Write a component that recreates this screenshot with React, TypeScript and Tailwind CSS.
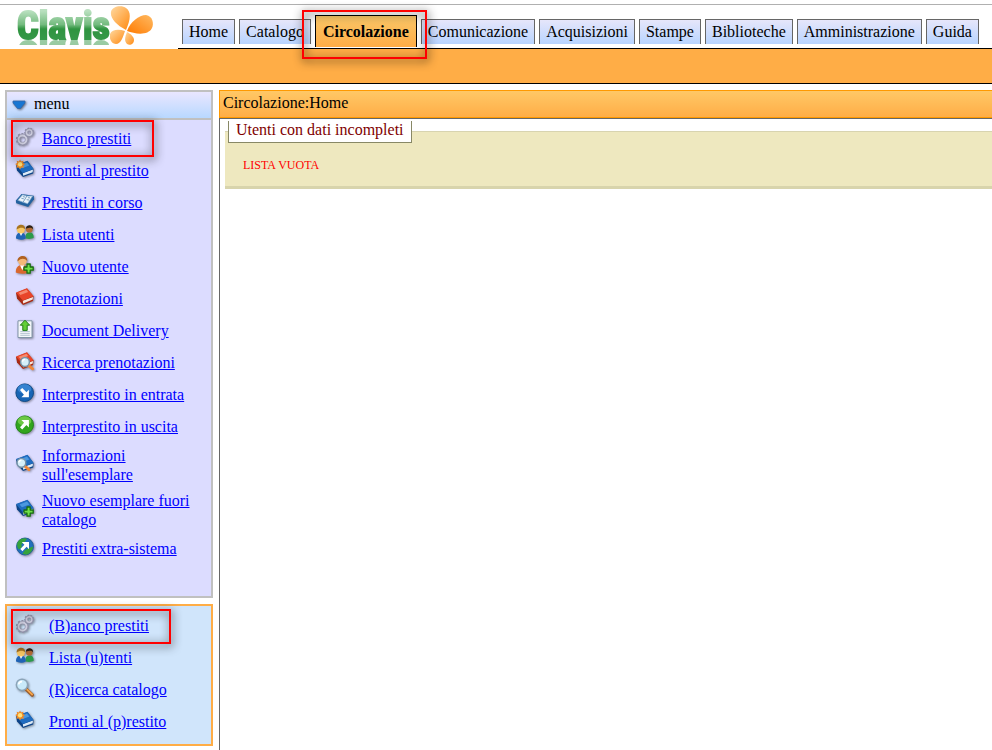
import React from "react";

type MenuItem = {
  label: string;
  Icon: React.FC;
  marked?: boolean;
};

const Svg: React.FC<{ children: React.ReactNode }> = ({ children }) => (
  <svg
    viewBox="0 0 20 20"
    aria-hidden="true"
    className="mb-1 h-5 w-5 shrink-0 drop-shadow-[1px_1px_1px_rgba(0,0,0,0.4)]"
  >
    {children}
  </svg>
);

const Gears = () => (
  <Svg>
    <circle cx="7.5" cy="12.5" r="4" fill="none" stroke="#9494ad" strokeWidth="3" />
    <circle cx="7.5" cy="12.5" r="5.8" fill="none" stroke="#9494ad" strokeWidth="1.6" strokeDasharray="2 1.65" />
    <circle cx="7.5" cy="12.5" r="4" fill="none" stroke="#cdcddd" strokeWidth="1.8" />
    <circle cx="14.2" cy="5.5" r="2.7" fill="none" stroke="#9494ad" strokeWidth="2.4" />
    <circle cx="14.2" cy="5.5" r="4.3" fill="none" stroke="#9494ad" strokeWidth="1.4" strokeDasharray="1.7 1.3" />
    <circle cx="14.2" cy="5.5" r="2.7" fill="none" stroke="#cdcddd" strokeWidth="1.4" />
  </Svg>
);

const BlueBook = () => (
  <>
    <path d="M1 6.5 12.5 2 18.5 10 18.2 14.5 8 18 2 11.5Z" fill="#0d4488" />
    <path d="M7.8 14.2 18 10.6 17.7 13.2 8.2 16.8Z" fill="#dbe9f6" />
    <path d="M1 6 12.5 1.8 18.6 9.9 7.6 14Z" fill="#1f6cc0" />
    <path d="M4.5 6.4 12 3.5 14.3 6.4 7 9.2Z" fill="#4b98e0" />
  </>
);

const RedBook = () => (
  <>
    <path d="M1 6 12 1.5 18.5 9.5 18 14 8 18 2 11.5Z" fill="#a72a14" />
    <path d="M7.8 13.8 18 10 17.7 12.6 8.2 16.5Z" fill="#f6e8df" />
    <path d="M1 5.5 12 1.3 18.7 9.2 7.8 13.4Z" fill="#e8452a" />
    <path d="M3.5 5.8 11.5 2.8 13.2 4.9 5.4 8Z" fill="#f58a70" />
  </>
);

const Lens: React.FC<{ x: number; y: number }> = ({ x, y }) => (
  <g transform={`translate(${x} ${y})`}>
    <path d="M3.4 3.4 7.6 6.8" stroke="#f0873a" strokeWidth="2.8" strokeLinecap="round" />
    <circle r="4.4" fill="#d5effa" stroke="#7693a8" strokeWidth="1.5" />
    <path d="M-2.5-.3A2.5 2.5 0 0 1 0-2.6" fill="none" stroke="#fff" strokeWidth="1.4" />
  </g>
);

const Plus = () => (
  <path
    d="M12 9h3.2v3h3v3.2h-3v3H12v-3H9V12h3Z"
    fill="#6fe048"
    stroke="#176b12"
    strokeWidth="1.3"
    strokeLinejoin="round"
  />
);

const ReadyBook = () => (
  <Svg>
    <BlueBook />
    <path
      d="m5 .5 1.2 1.9 2.2-.6-.3 2.3 2 1-1.8 1.4.6 2.3-2.4-.3L5 10.2 3.8 8.4l-2.4.3.5-2.3L.3 5l1.9-1L1.7 1.8l2.2.6Z"
      fill="#f08a24"
    />
    <circle cx="5.1" cy="5.2" r="2.2" fill="#ffe27a" />
  </Svg>
);

const OpenBook = () => (
  <Svg>
    <path d="M.8 9.5 6.5 3l12.3 1.8.2 3.5-5.8 7.6L1.2 12.3Z" fill="#23629f" />
    <path d="M2.8 9.3 7.5 3.8l4.4 1.2 5.7.1-5 7.6-4.5-1.5Z" fill="#edf5fb" stroke="#80a8cc" strokeWidth=".7" />
    <path d="M11.9 5 8.1 11.2M7.8 5.6l2.4.5M6.4 7.3l2.5.6M12.9 6.7l2.2.2M11.7 8.7l2.3.3" fill="none" stroke="#6d97bd" strokeWidth=".9" />
  </Svg>
);

const Users = () => (
  <Svg>
    <path d="M10.5 15.5c-.3-4 .8-6 4-6s4.3 2 4.2 5.3c-2 1.2-5 1.4-8.2.7Z" fill="#2b9a4a" />
    <circle cx="14.3" cy="6.2" r="3.4" fill="#b56b36" />
    <path d="M10.8 5.8c.2-4.7 7.7-4.6 7.3.4-1.1-1.7-3-2.2-7.3-.4Z" fill="#2b2118" />
    <path d="M1 15.6c0-4 1.4-5.8 4.8-5.8s5 2 5 5.6c-2.4 1.6-7 1.7-9.8.2Z" fill="#1f63b5" />
    <path d="m4.6 10 1.4 3 1.6-3Z" fill="#fff" />
    <circle cx="5.9" cy="6.6" r="4" fill="#f8c865" />
    <path d="M1.6 6.6c-.4-6 9-6.6 8.6-.4C8.3 4.4 5.3 3.8 1.6 6.6Z" fill="#a87420" />
  </Svg>
);

const NewUser = () => (
  <Svg>
    <path d="M.8 17.6c0-5 2-7.6 6.5-7.6s6.6 2.5 6.6 7.4c-3.8 1.6-9.6 1.6-13.1.2Z" fill="#d9672e" />
    <path d="m5 10.3 2.3 5 2.2-5Z" fill="#fff" />
    <circle cx="7.4" cy="5.8" r="4.4" fill="#f4b878" />
    <path d="M2.5 6.4C1.8-.3 13-1.4 12.2 6 9.6 3.4 6.5 2.8 2.5 6.4Z" fill="#b0601f" />
    <Plus />
  </Svg>
);

const Reservation = () => (
  <Svg>
    <RedBook />
  </Svg>
);

const Delivery = () => (
  <Svg>
    <path d="M3 1.8h14v16.7H3Z" fill="#f4f7fa" stroke="#8195a8" />
    <path d="M5.3 12.5h9.5M5.3 14.4h9.5M5.3 16.3h9.5" stroke="#a5b7c6" strokeWidth=".8" />
    <path d="m10 1.2 4.7 5h-2.5v5.2H7.8V6.2H5.3Z" fill="#63cf35" stroke="#217b17" />
  </Svg>
);

const ReservationSearch = () => (
  <Svg>
    <RedBook />
    <Lens x={10} y={11} />
  </Svg>
);

const Incoming = () => (
  <Svg>
    <circle cx="9.7" cy="9.7" r="8.8" fill="#1765b5" stroke="#124b87" />
    <ellipse cx="9.5" cy="6" rx="6.8" ry="4.7" fill="#3583d0" />
    <path d="m5 7.1 2.2-2.2 4.3 4.3 2.4-2.4v7.5H6.4l2.5-2.5Z" fill="#fff" />
  </Svg>
);

const Outgoing = () => (
  <Svg>
    <circle cx="9.7" cy="9.7" r="8.8" fill="#31a51d" stroke="#24831c" />
    <ellipse cx="9.5" cy="6" rx="6.8" ry="4.7" fill="#6cc844" />
    <path d="M6.4 5h7.5v7.5l-2.5-2.5-4.2 4.4L5 12.2 9.1 7.8Z" fill="#fff" />
  </Svg>
);

const ItemInfo = () => (
  <Svg>
    <BlueBook />
    <Lens x={6.4} y={9.8} />
  </Svg>
);

const NewItem = () => (
  <Svg>
    <BlueBook />
    <Plus />
  </Svg>
);

const Globe = () => (
  <Svg>
    <circle cx="10" cy="9.5" r="8.5" fill="#2270bd" stroke="#165692" strokeWidth=".8" />
    <path d="M3 4.4C5.4 1 10 .5 12 1.9L9.8 5 6.4 7.2l.5 3-3 2.3C1.6 9.7 1.7 6.6 3 4.4ZM14 11l4-1.5c0 3.7-2.8 7.4-6.6 8.2l-4-.9 2.4-3.6Z" fill="#35a33c" />
    <path d="M6.8 5h7.2v7.2l-2.4-2.4-4.2 4.4-2.1-2.1 4.1-4.4Z" fill="#fff" />
  </Svg>
);

const Magnifier = () => (
  <Svg>
    <path d="m11.2 11.2 6 5.8" stroke="#9a5c2b" strokeWidth="3.6" strokeLinecap="round" />
    <path d="m12.2 11.7 5 4.8" stroke="#f5a54a" strokeWidth="1.8" strokeLinecap="round" />
    <circle cx="7" cy="6.8" r="5.6" fill="#c9eafa" stroke="#8ba4b8" strokeWidth="1.5" />
    <path d="M3.7 6.4c.2-1.8 1.7-2.9 3.4-2.8" fill="none" stroke="#fff" strokeWidth="1.7" />
  </Svg>
);

const tabs = [
  "Home",
  "Catalogo",
  "Circolazione",
  "Comunicazione",
  "Acquisizioni",
  "Stampe",
  "Biblioteche",
  "Amministrazione",
  "Guida",
];

const menuItems: MenuItem[] = [
  { label: "Banco prestiti", Icon: Gears, marked: true },
  { label: "Pronti al prestito", Icon: ReadyBook },
  { label: "Prestiti in corso", Icon: OpenBook },
  { label: "Lista utenti", Icon: Users },
  { label: "Nuovo utente", Icon: NewUser },
  { label: "Prenotazioni", Icon: Reservation },
  { label: "Document Delivery", Icon: Delivery },
  { label: "Ricerca prenotazioni", Icon: ReservationSearch },
  { label: "Interprestito in entrata", Icon: Incoming },
  { label: "Interprestito in uscita", Icon: Outgoing },
  { label: "Informazioni sull'esemplare", Icon: ItemInfo },
  { label: "Nuovo esemplare fuori catalogo", Icon: NewItem },
  { label: "Prestiti extra-sistema", Icon: Globe },
];

const shortcuts: MenuItem[] = [
  { label: "(B)anco prestiti", Icon: Gears, marked: true },
  { label: "Lista (u)tenti", Icon: Users },
  { label: "(R)icerca catalogo", Icon: Magnifier },
  { label: "Pronti al (p)restito", Icon: ReadyBook },
];

const Marker: React.FC<{ className: string }> = ({ className }) => (
  <span
    className={`pointer-events-none absolute z-10 border-2 border-[#ff0000] drop-shadow-[1px_2px_5px_rgba(0,0,0,0.9)] ${className}`}
  />
);

const Logo: React.FC = () => (
  <a href="#" className="flex h-11 items-start pl-4">
    <svg
      viewBox="0 0 94 35"
      className="h-[35px] w-[94px] overflow-visible [-webkit-box-reflect:below_0px_linear-gradient(transparent_85%,rgba(0,0,0,0.5)_85%)]"
    >
      <defs>
        <linearGradient id="letters" gradientUnits="userSpaceOnUse" x1="0" y1="6" x2="0" y2="36">
          <stop offset="0" stopColor="#b9e0bf" />
          <stop offset="0.45" stopColor="#74bb7f" />
          <stop offset="0.6" stopColor="#2f9440" />
          <stop offset="1" stopColor="#37994a" />
        </linearGradient>
      </defs>
      <text
        x="1"
        y="34"
        fill="url(#letters)"
        stroke="url(#letters)"
        strokeWidth="2"
        className="font-['Liberation_Sans_Narrow','Roboto_Condensed','Open_Sans_Condensed',sans-serif] text-[38px] font-bold"
      >
        Clavis
      </text>
    </svg>
    <svg viewBox="0 0 44 40" className="mt-px h-10 w-11" aria-hidden="true">
      <defs>
        <linearGradient id="petalLight" x1="0" y1="0" x2="1" y2="1">
          <stop offset="0" stopColor="#ffd9a0" />
          <stop offset="1" stopColor="#ff8a12" />
        </linearGradient>
        <linearGradient id="petalDeep" x1="0" y1="1" x2="1" y2="0">
          <stop offset="0" stopColor="#ff7a00" />
          <stop offset="1" stopColor="#ffba62" />
        </linearGradient>
      </defs>
      <path d="M16 24C6 19 0 12 1 6 2 0 12-1 16 2c6 4 4 13 0 22Z" fill="url(#petalLight)" />
      <path d="M17 25C20 16 29 9 36 9c7 1 8 9 6 13-4 8-17 6-25 3Z" fill="url(#petalDeep)" />
      <path d="M15 25C9 23 2 23 0 28c-1 6 2 10 6 10 5 0 7-7 9-13Z" fill="url(#petalLight)" />
      <path d="M17 26c-2 5-3 9 0 12 3 2 7 0 7-4 0-3-3-6-7-8Z" fill="url(#petalLight)" />
    </svg>
  </a>
);

const MenuList: React.FC<{
  items: MenuItem[];
  gap: string;
  marker: string;
}> = ({ items, gap, marker }) => (
  <ul className="flex flex-col gap-px px-2">
    {items.map(({ label, Icon, marked }) => (
      <li key={label} className={`relative flex min-h-[31px] items-center py-[3px] ${gap}`}>
        <Icon />
        <a href="#" className="leading-[19px] text-[#0000ff] underline">
          {label}
        </a>
        {marked && <Marker className={marker} />}
      </li>
    ))}
  </ul>
);

const App: React.FC = () => {
  return (
    <div className="flex min-h-screen flex-col bg-white pt-1 font-['Liberation_Serif',serif] text-base text-black">
      <header>
        <div className="flex h-[45px] border-t border-[#b0b0b0]">
          <div className="w-[178px] shrink-0">
            <Logo />
          </div>
          <nav className="grow border-b border-black pl-1">
            <ul className="flex gap-1 pt-[14px]">
              {tabs.map((tab) =>
                tab === "Circolazione" ? (
                  <li key={tab} className="relative -mt-1">
                    <a
                      href="#"
                      aria-current="page"
                      className="block h-8 border border-b-0 border-black bg-linear-to-b from-[#f9c667] to-[#ffad46] px-[7px] leading-8 font-bold"
                    >
                      {tab}
                    </a>
                    <Marker className="-top-[5px] -right-[10px] -bottom-3 -left-[13px]" />
                  </li>
                ) : (
                  <li key={tab}>
                    <a
                      href="#"
                      className="block h-[25px] border border-b-0 border-[#666] bg-linear-to-b from-[#e6e6fa] to-[#b8d4ff] px-[6px] leading-6"
                    >
                      {tab}
                    </a>
                  </li>
                ),
              )}
            </ul>
          </nav>
        </div>
        <div className="h-[35px] border-b border-black bg-[#ffad46]" />
      </header>

      <div className="flex grow gap-[6px] pl-[5px]">
        <aside className="flex w-[208px] shrink-0 flex-col gap-[6px] pt-[6px] pb-1">
          <section className="border-2 border-[#c0c0c0] bg-[#dcdcff] pb-8">
            <h2 className="flex h-7 items-start gap-2 border-b-2 border-[#c0c0c0] bg-linear-to-b from-[#e9e6ff] to-[#b8d8ff] pl-[5px] leading-6">
              <svg
                viewBox="0 0 14 10"
                className="mt-2 h-[10px] w-[14px] drop-shadow-[1px_1px_1px_rgba(0,0,0,0.5)]"
                aria-hidden="true"
              >
                <path d="M1 1h12v2L8.5 8.5h-3L1 3Z" fill="#1876d2" stroke="#3565a5" strokeWidth=".8" />
              </svg>
              menu
            </h2>
            <div className="pt-[3px]">
              <MenuList
                items={menuItems}
                gap="gap-[7px]"
                marker="-top-[3px] -bottom-[3px] -left-1 w-[143px]"
              />
            </div>
          </section>
          <section className="border-2 border-[#ffad46] bg-[#d0e5fb] pt-1 pb-[7px]">
            <MenuList
              items={shortcuts}
              gap="gap-[14px]"
              marker="-top-px -bottom-[3px] -left-1 w-[160px]"
            />
          </section>
        </aside>

        <main className="flex min-w-0 grow flex-col pt-[6px]">
          <h1 className="h-7 border border-r-0 border-[#ff9900] bg-linear-to-b from-[#ffc866] to-[#ffad46] pl-[3px] leading-6">
            Circolazione:Home
          </h1>
          <div className="grow border-t border-l border-[#666] pt-3 pl-[5px]">
            <section className="relative h-[58px] border-t border-b-3 border-t-[#d8d4b0] border-b-[#d8d4ac] bg-[#eee8bf]">
              <h2 className="absolute -top-[11px] left-[3px] h-[22px] border border-t-0 border-[#888866] bg-white px-[7px] leading-[18px] text-[#800000]">
                Utenti con dati incompleti
              </h2>
              <p className="pt-[23px] pl-[18px] text-xs leading-5 text-[#ff0000]">LISTA VUOTA</p>
            </section>
          </div>
        </main>
      </div>
    </div>
  );
};

export default App;
